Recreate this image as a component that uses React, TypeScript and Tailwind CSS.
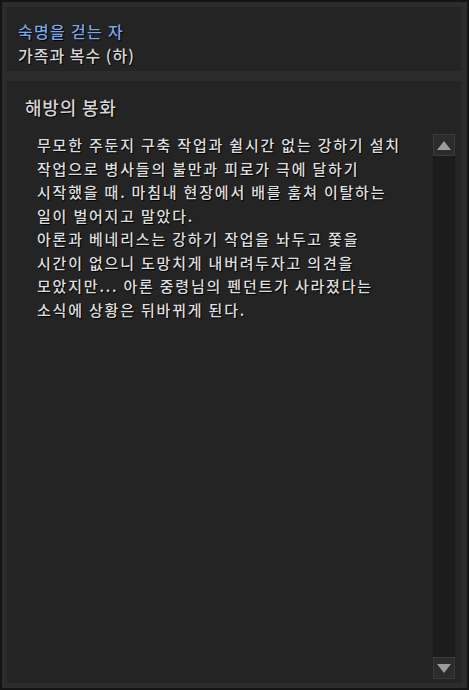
import React from 'react';

const body = [
  '무모한 주둔지 구축 작업과 쉴시간 없는 강하기 설치',
  '작업으로 병사들의 불만과 피로가 극에 달하기',
  '시작했을 때. 마침내 현장에서 배를 훔쳐 이탈하는',
  '일이 벌어지고 말았다.',
  '아론과 베네리스는 강하기 작업을 놔두고 쫓을',
  '시간이 없으니 도망치게 내버려두자고 의견을',
  '모았지만... 아론 중령님의 펜던트가 사라졌다는',
  '소식에 상황은 뒤바뀌게 된다.',
];

const font = { fontFamily: '"Noto Sans CJK KR", "Noto Sans", sans-serif' };

const QuestLog = () => {
  return (
    <div className="w-[469px] h-[690px] bg-[#2c2c2c] border-2 border-[#141414] p-[5px] pr-[6px] flex flex-col gap-[10px]" style={font}>
      <div className="h-[64px] bg-[#242424] px-[11px] pt-[12px] flex flex-col font-medium [text-shadow:1px_1px_1px_#000]">
        <div className="text-[16px] leading-[24px] text-[#7aa6ea] tracking-[1.3px]">숙명을 걷는 자</div>
        <div className="text-[16px] leading-[24px] text-[#d6d6d6] tracking-[1px]">가족과 복수 (하)</div>
      </div>
      <div className="flex-1 bg-[#242424] flex flex-col pl-[18px] pr-[6px] pt-[14px] pb-[4px]">
        <div className="text-[18px] leading-[24px] font-medium text-[#d4d4d4] tracking-[0.8px] [text-shadow:1px_1px_1px_#000]">해방의 봉화</div>
        <div className="flex-1 flex mt-[12px]">
          <div className="flex-1 pl-[12px] pt-[2px] text-[15px] leading-[23.5px] font-medium text-[#dedede] tracking-[1.8px] [text-shadow:1px_1px_1px_#000]">
            {body.map((line, i) => (
              <div key={i}>{line}</div>
            ))}
          </div>
          <div className="w-[22px] mt-[3px] bg-[#1c1c1c] flex flex-col justify-between">
            <div className="h-[22px] bg-[#2c2c2c] border border-[#3a3a3a] flex items-center justify-center">
              <svg width="14" height="9" viewBox="0 0 14 9"><polygon points="7,0 14,9 0,9" fill="#9c9c9c" /></svg>
            </div>
            <div className="h-[22px] bg-[#2c2c2c] border border-[#3a3a3a] flex items-center justify-center">
              <svg width="14" height="9" viewBox="0 0 14 9"><polygon points="0,0 14,0 7,9" fill="#9c9c9c" /></svg>
            </div>
          </div>
        </div>
      </div>
    </div>
  );
};

export default function App() {
  return <QuestLog />;
}
